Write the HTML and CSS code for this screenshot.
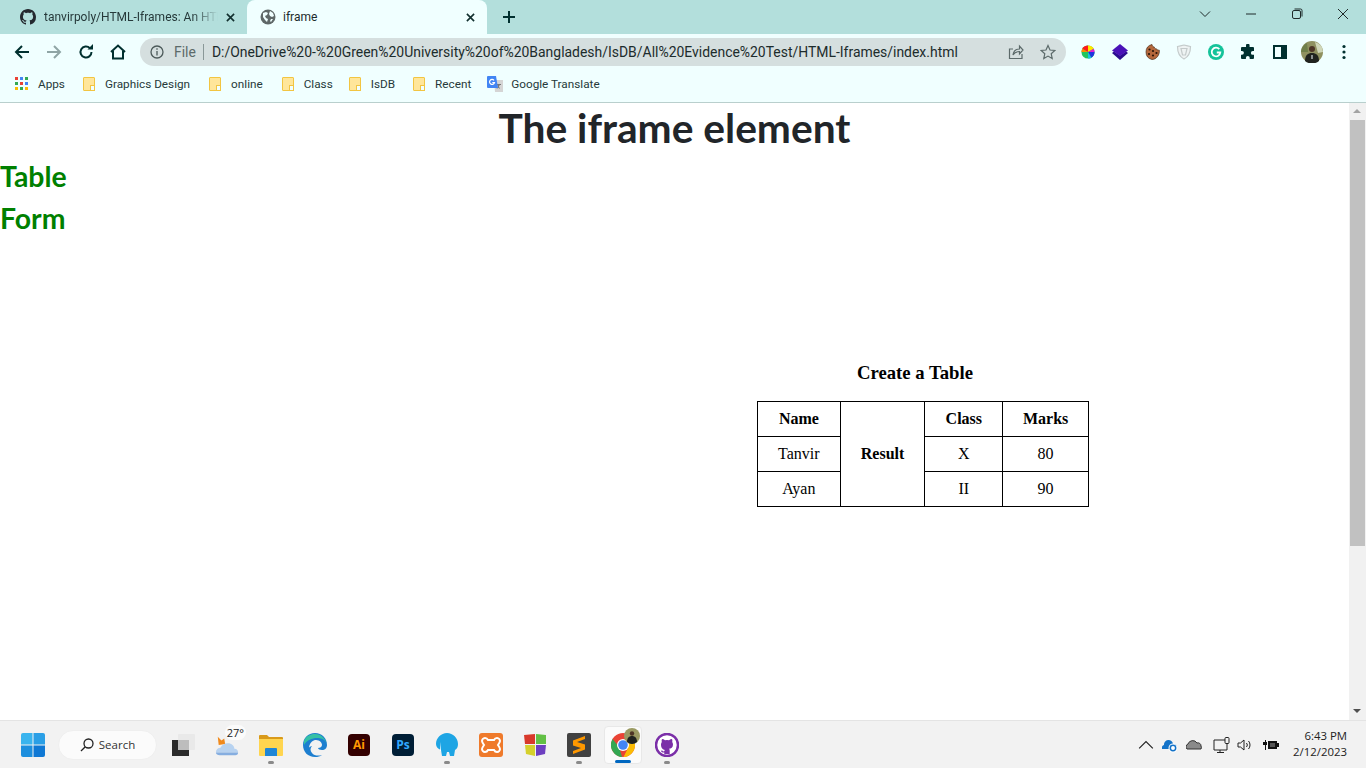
FILE: index.html
```html
<!DOCTYPE html>
<html lang="en">
<head>
    <meta charset="UTF-8">
    <meta name="viewport" content="width=device-width, initial-scale=1.0">
    <title>iframe</title>
    <link rel="stylesheet" href="styles.css">
</head>
<body>
    <!-- Browser tabs -->
    <div class="tabstrip">
        <div class="tab">
            <svg class="tab-icon" viewBox="0 0 16 16"><path fill="#24292f" d="M8 0C3.58 0 0 3.58 0 8c0 3.54 2.29 6.53 5.47 7.59.4.07.55-.17.55-.38 0-.19-.01-.82-.01-1.49-2.01.37-2.53-.49-2.69-.94-.09-.23-.48-.94-.82-1.13-.28-.15-.68-.52-.01-.53.63-.01 1.08.58 1.23.82.72 1.21 1.87.87 2.33.66.07-.52.28-.87.51-1.07-1.78-.2-3.64-.89-3.64-3.95 0-.87.31-1.59.82-2.15-.08-.2-.36-1.02.08-2.12 0 0 .67-.21 2.2.82.64-.18 1.32-.27 2-.27s1.36.09 2 .27c1.53-1.04 2.2-.82 2.2-.82.44 1.1.16 1.92.08 2.12.51.56.82 1.27.82 2.15 0 3.07-1.87 3.75-3.65 3.95.29.25.54.73.54 1.48 0 1.07-.01 1.93-.01 2.2 0 .21.15.46.55.38A8 8 0 0 0 16 8c0-4.42-3.58-8-8-8z"/></svg>
            <span class="tab-title tab-fade">tanvirpoly/HTML-Iframes: An HTML</span>
            <svg class="tab-close" viewBox="0 0 10 10"><path d="M1 1l8 8M9 1L1 9"/></svg>
        </div>
        <div class="tab tab-active">
            <svg class="tab-icon" viewBox="0 0 16 16"><circle cx="8" cy="8" r="7.500" fill="#5f6868"/><path fill="#f0ffff" d="M3 4l3-1 2 1-1 2-2 1 1 2 2 1-1 3-2-2-2-3zM10 2l3 2 1 3-2 1-2-1-1-2zM11 10h2l-2 3-1-1z"/></svg>
            <span class="tab-title">iframe</span>
            <svg class="tab-close" viewBox="0 0 10 10"><path d="M1 1l8 8M9 1L1 9"/></svg>
        </div>
        <svg class="new-tab" viewBox="0 0 12 12"><path d="M6 0v12M0 6h12"/></svg>
        <div class="window-controls">
            <div class="win-btn"><svg viewBox="0 0 12 12"><path d="M1 3.500l5 5 5-5"/></svg></div>
            <div class="win-btn"><svg viewBox="0 0 12 12"><path d="M1 6h10"/></svg></div>
            <div class="win-btn"><svg viewBox="0 0 12 12"><rect x="1.500" y="2.500" width="8" height="8" rx="1.500"/><path d="M3.500 1h6a1.500 1.500 0 0 1 1.500 1.500v6"/></svg></div>
            <div class="win-btn"><svg viewBox="0 0 12 12"><path d="M1 1l10 10M11 1L1 11"/></svg></div>
        </div>
    </div>

    <!-- Address bar -->
    <div class="toolbar">
        <div class="nav-btn"><svg viewBox="0 0 16 16"><path d="M15 8H2M8 2L2 8l6 6"/></svg></div>
        <div class="nav-btn nav-off"><svg viewBox="0 0 16 16"><path d="M1 8h13M8 2l6 6-6 6"/></svg></div>
        <div class="nav-btn"><svg viewBox="0 0 16 16"><path d="M13.500 8a5.500 5.500 0 1 1-1.600-3.900"/><path class="solid" d="M9.500 5.500H15V0z"/></svg></div>
        <div class="nav-btn"><svg viewBox="0 0 16 16"><path d="M1 8l7-6.500L15 8M3 7v7.500h10V7"/></svg></div>
        <div class="omnibox">
            <svg class="info-icon" viewBox="0 0 14 14"><circle cx="7" cy="7" r="6"/><path d="M7 6v4.500M7 3.300v1.500"/></svg>
            <span class="scheme">File</span>
            <span class="url">D:/OneDrive%20-%20Green%20University%20of%20Bangladesh/IsDB/All%20Evidence%20Test/HTML-Iframes/index.html</span>
            <svg class="omni-icon" viewBox="0 0 16 16"><path d="M14 10v4.500H1.500V5H5M5 11c.5-4 3.500-6 6.500-6V2L15 6l-3.500 4V7.500C9 7.500 6.500 8.500 5 11z"/></svg>
            <svg class="omni-icon" viewBox="0 0 16 16"><path d="M8 1.500l2 4.500 4.800.500-3.600 3.200 1 4.800L8 12.100l-4.200 2.400 1-4.800L1.200 6.500 6 6z"/></svg>
        </div>
        <div class="extensions">
            <div class="ext ext-wheel">
                <svg viewBox="0 0 16 16"><circle cx="8" cy="8" r="7.500" fill="#22c55e"/><path fill="#ff1a1a" d="M8 8V.5A7.500 7.500 0 0 0 1.500 4.200z"/><path fill="#ff8c00" d="M8 8L1.500 4.200A7.500 7.500 0 0 0 .5 8z"/><path fill="#ffe600" d="M8 8V.5a7.500 7.500 0 0 1 6.500 3.700z"/><path fill="#e01fd0" d="M8 8l6.500-3.700A7.500 7.500 0 0 1 15.500 8z"/><path fill="#2035e0" d="M8 8h7.500a7.500 7.500 0 0 1-3.700 6.500z"/><path fill="#18c4e0" d="M8 8l3.800 6.500A7.500 7.500 0 0 1 8 15.500z"/></svg>
            </div>
            <div class="ext">
                <svg viewBox="0 0 16 16"><path fill="#2c0d8f" d="M0 9l2-1.500 6 4 6-4L16 9l-8 7z"/><path fill="#4a12b8" d="M8 0l8 6.500L8 12 0 6.500z"/></svg>
            </div>
            <div class="ext">
                <svg viewBox="0 0 16 16"><path fill="#b5683c" stroke="#4b2a14" stroke-width=".7" d="M8 .5c.3 1.700 1.200 2.500 2.300 2.500.1 1.300 1 2.100 2.400 1.900.3.900 1 1.300 2.600 1.300.5 4.700-2.900 9.300-7.300 9.300A7.700 7.700 0 0 1 8 .5z"/><circle cx="5.500" cy="5.500" r="1.100" fill="#2a1408"/><circle cx="9" cy="7" r="1.100" fill="#2a1408"/><circle cx="5" cy="10" r="1.100" fill="#2a1408"/><circle cx="9" cy="11.500" r="1.100" fill="#2a1408"/><circle cx="12.500" cy="9" r="1.100" fill="#2a1408"/></svg>
            </div>
            <div class="ext">
                <svg viewBox="0 0 16 16"><path fill="#eef3f3" stroke="#c4cbcb" stroke-width="1.200" d="M1.500 2.500C4 2 6 1.500 8 1c2 .5 4 1 6.500 1.500C14.500 9 12 13 8 15 4 13 1.500 9 1.500 2.500z"/><path fill="none" stroke="#c4cbcb" stroke-width="1.200" d="M5 4.500h6L9.500 11h-3z"/></svg>
            </div>
            <div class="ext">
                <svg viewBox="0 0 16 16"><circle cx="8" cy="8" r="8" fill="#15c39a"/><path fill="none" stroke="#fff" stroke-width="1.800" d="M11.300 5.200a4.300 4.300 0 1 0 1 3.300H8.800"/></svg>
            </div>
            <div class="ext">
                <svg viewBox="0 0 16 16"><path fill="#00302f" d="M6 1.500a1.800 1.800 0 0 1 3.600 0V3H13a1 1 0 0 1 1 1v3h-1.200a1.900 1.900 0 0 0 0 3.800H14V14a1 1 0 0 1-1 1H9.700v-1.200a1.900 1.900 0 0 0-3.800 0V15H2a1 1 0 0 1-1-1v-3.300h1a1.900 1.900 0 0 0 0-3.800H1V4a1 1 0 0 1 1-1h4z"/></svg>
            </div>
            <div class="ext ext-panel">
                <svg viewBox="0 0 14 14"><path fill="#00302f" d="M0 0h14v14H0z"/><path fill="#f0ffff" d="M2 2h6v10H2z"/></svg>
            </div>
            <div class="ext ext-avatar">
                <svg viewBox="0 0 22 22"><circle cx="11" cy="11" r="11" fill="#8f9160"/><path fill="#cfd6b8" d="M14 1a11 11 0 0 1 8 10l-5 1z"/><path fill="#6f7f4a" d="M0 11a11 11 0 0 1 6-9l1 9z"/><path fill="#20231f" d="M4 20c0-6 3-8 7-8s7 2 7 8a11 11 0 0 1-14 0z"/><path fill="#8a8f8f" d="M10 14h2v4h-2z"/><circle cx="11" cy="8" r="3" fill="#4d3526"/></svg>
            </div>
            <div class="ext ext-menu">
                <svg viewBox="0 0 4 16"><circle cx="2" cy="2.500" r="1.600" fill="#00302f"/><circle cx="2" cy="8" r="1.600" fill="#00302f"/><circle cx="2" cy="13.500" r="1.600" fill="#00302f"/></svg>
            </div>
        </div>
    </div>

    <!-- Bookmarks -->
    <div class="bookmarks">
        <div class="bookmark bookmark-apps">
            <svg viewBox="0 0 13 13"><g>
                <rect width="3" height="3" fill="#ea4335"/><rect x="5" width="3" height="3" fill="#4285f4"/><rect x="10" width="3" height="3" fill="#34a853"/>
                <rect y="5" width="3" height="3" fill="#34a853"/><rect x="5" y="5" width="3" height="3" fill="#ea4335"/><rect x="10" y="5" width="3" height="3" fill="#4285f4"/>
                <rect y="10" width="3" height="3" fill="#fbbc05"/><rect x="5" y="10" width="3" height="3" fill="#34a853"/><rect x="10" y="10" width="3" height="3" fill="#fbbc05"/>
            </g></svg>
            Apps
        </div>
        <div class="bookmark bookmark-wide"><span class="folder"></span>Graphics Design</div>
        <div class="bookmark bookmark-wide"><span class="folder"></span>online</div>
        <div class="bookmark bookmark-tight"><span class="folder"></span>Class</div>
        <div class="bookmark"><span class="folder"></span>IsDB</div>
        <div class="bookmark bookmark-tight"><span class="folder"></span>Recent</div>
        <div class="bookmark bookmark-translate">
            <svg viewBox="0 0 16 16"><path fill="#d5d5d5" d="M7 4h9v12H8z"/><path fill="#777" d="M10 8h4v1h-1.200l-1 2 1.200 1-.5.700-1.300-1-1.200 1-.5-.7 1.300-1.100-.6-1.900H10z"/><path fill="#4285f4" d="M1 0h8l2 12H1a1 1 0 0 1-1-1V1a1 1 0 0 1 1-1z"/><path fill="none" stroke="#fff" stroke-width="1.200" d="M7 4.300A2.500 2.500 0 1 0 7.500 6.500H5.300"/></svg>
            Google Translate
        </div>
    </div>

    <!-- Page -->
    <div class="viewport">
        <main class="page">
            <h1>The iframe element</h1>
            <a class="page-link" href="#">Table</a>
            <a class="page-link" href="#">Form</a>
            <div class="frame">
                <div class="frame-inner">
                    <h3>Create a Table</h3>
                    <table>
                        <tr>
                            <th class="col-name">Name</th>
                            <th class="col-result" rowspan="3">Result</th>
                            <th class="col-class">Class</th>
                            <th class="col-marks">Marks</th>
                        </tr>
                        <tr>
                            <td>Tanvir</td>
                            <td>X</td>
                            <td>80</td>
                        </tr>
                        <tr>
                            <td>Ayan</td>
                            <td>II</td>
                            <td>90</td>
                        </tr>
                    </table>
                </div>
            </div>
        </main>
        <div class="scrollbar">
            <span class="arrow-up"></span>
            <div class="track"><div class="thumb"></div></div>
            <span class="arrow-down"></span>
        </div>
    </div>

    <!-- Windows taskbar -->
    <footer class="taskbar">
        <div class="task-item">
            <svg viewBox="0 0 24 24"><path fill="#3ab4ee" d="M0 2a2 2 0 0 1 2-2h9.500v11.500H0z"/><path fill="#2a9fe6" d="M12.500 0H22a2 2 0 0 1 2 2v9.500H12.500z"/><path fill="#1d8fde" d="M0 12.500h11.500V24H2a2 2 0 0 1-2-2z"/><path fill="#0f78d4" d="M12.500 12.500H24V22a2 2 0 0 1-2 2h-9.500z"/></svg>
        </div>
        <div class="search-pill">
            <svg viewBox="0 0 14 14"><circle cx="8.500" cy="5.500" r="4.500"/><path d="M5.300 8.700L1 13"/></svg>
            Search
        </div>
        <div class="task-item">
            <svg viewBox="0 0 24 24"><rect x="1" y="7" width="17" height="16" fill="#2b2b2b"/><rect x="7" y="1" width="17" height="16" rx="1" fill="#e9e9e9"/><rect x="7" y="7" width="11" height="10" fill="#bdbdbd"/></svg>
        </div>
        <div class="task-item task-weather">
            <svg viewBox="0 0 26 24"><path fill="#f08a1d" d="M3 3l4 4 3-2 1 6-7 1z"/><path fill="#b7d2f0" d="M1 20c0-3 2-5 5-5 1-3 4-5 8-5 4 0 7 3 7 6 3 0 4 2 4 4z"/><path fill="#86aee0" d="M1 20h24c0 2-1 3-3 3H5c-2 0-4-1-4-3z"/></svg>
            <span class="temp">27°</span>
        </div>
        <div class="task-item task-open">
            <svg viewBox="0 0 24 24"><path fill="#d99a1a" d="M0 3a1 1 0 0 1 1-1h7l2 2h13a1 1 0 0 1 1 1v5H0z"/><path fill="#ffd54f" d="M0 6h24v16a1 1 0 0 1-1 1H1a1 1 0 0 1-1-1z"/><path fill="#1f86d6" d="M7 15h10a1 1 0 0 1 1 1v7H6v-7a1 1 0 0 1 1-1z"/></svg>
        </div>
        <div class="task-item">
            <svg viewBox="0 0 24 24"><path fill="#1d7fd0" d="M12 0C5 0 0 5 0 12c0 7 5 12 12 12 3 0 5-.5 7-2-3 1-8 1-10-2-2-2-2-5 0-7-1 0-2 .5-3 1.500C7 9 10 7 13 7c4 0 6 3 6 5 0 2-2 3-4 3 0 1 2 2 4 2 3 0 5-2 5-5 0-7-5-12-12-12z"/><path fill="#35c1a5" d="M1 8C3 3 7 1 12 1c6 0 11 5 11.800 10.500C23 7 19 5 14 5 9 5 4 7 1 12z"/></svg>
        </div>
        <div class="task-item">
            <div class="app-tile tile-ai">Ai</div>
        </div>
        <div class="task-item">
            <div class="app-tile tile-ps">Ps</div>
        </div>
        <div class="task-item task-open">
            <svg viewBox="0 0 24 24"><path fill="#1ea5e4" d="M12 0c6 0 11 5 11 11 0 3-1 5-3 6l-1 6h-4l-1-4h-2l-1 4H7l-1-6C3 16 1 14 1 11 1 5 6 0 12 0z"/><path fill="#fff" d="M6 9v9H5z"/></svg>
        </div>
        <div class="task-item">
            <svg viewBox="0 0 24 24"><rect width="24" height="24" rx="3" fill="#ef7a2b"/><path fill="none" stroke="#fff" stroke-width="2" d="M6 5c2 0 3 2 3 2h6s1-2 3-2 3 2 3 3-1 2.500-2 4c1 1.500 2 3 2 4s-1 3-3 3-3-2-3-2H9s-1 2-3 2-3-2-3-3 1-2.500 2-4c-1-1.500-2-3-2-4s1-3 3-3z"/></svg>
        </div>
        <div class="task-item">
            <svg viewBox="0 0 24 24"><path fill="#d8392b" d="M1 2l11-1v10H2z"/><path fill="#62c045" d="M13 1l10 1v9H13z"/><path fill="#d5d02c" d="M2 12h10v11l-9-2z"/><path fill="#6d3fc0" d="M13 12h10l-1 9-9 2z"/></svg>
        </div>
        <div class="task-item task-open">
            <svg viewBox="0 0 24 24"><rect width="24" height="24" rx="2" fill="#414141"/><path fill="#ff9800" d="M18 3L6 7.500v5l8 2.500-8 3v3l12-4.500v-5L10 9l8-3z"/></svg>
        </div>
        <div class="task-item task-active">
            <svg viewBox="0 0 24 24"><circle cx="12" cy="12" r="12" fill="#ea4335"/><path fill="#34a853" d="M12 24A12 12 0 0 1 1.600 6L8 14l3 10z"/><path fill="#fbbc05" d="M23 7a12 12 0 0 1-10.500 17L17 15l-1-5z"/><circle cx="12" cy="12" r="6" fill="#fff"/><circle cx="12" cy="12" r="4.800" fill="#4285f4"/></svg>
            <svg class="badge" viewBox="0 0 16 16"><circle cx="8" cy="8" r="8" fill="#9a9a63"/><path fill="#20231f" d="M3 14c0-4 2-6 5-6s5 2 5 6a8 8 0 0 1-10 0z"/><circle cx="8" cy="5.500" r="2.200" fill="#4d3526"/></svg>
        </div>
        <div class="task-item task-open">
            <svg viewBox="0 0 24 24"><circle cx="12" cy="12" r="11" fill="#fff" stroke="#7b2fa8" stroke-width="2.500"/><path fill="#7b2fa8" d="M7 6c1 0 2 .5 3 1.200a8 8 0 0 1 4 0C15 6.500 16 6 17 6c.5 1 .5 2 .2 3 .5.700.8 1.500.8 2.500 0 3-2 4-4 4.300.500.500.700 1 .700 1.700V21H9.300v-1.500c-1.500.300-3-.2-3.500-1.700l1.500-.3c.5 1 1.200 1 2 .8 0-.5.200-1 .5-1.400C8 16.500 6 15.500 6 11.500c0-1 .3-1.800.8-2.500-.3-1-.3-2 .2-3z"/></svg>
        </div>
        <div class="tray">
            <svg class="tray-icon" viewBox="0 0 14 14"><path d="M1 10l6-6 6 6"/></svg>
            <svg class="tray-icon" viewBox="0 0 16 14"><path fill="#1473c8" stroke="none" d="M0 11a3 3 0 0 1 2-4 4.500 4.500 0 0 1 9-1 3.500 3.500 0 0 1 4 3v2z"/><circle cx="11" cy="10" r="4.500" fill="#fff" stroke="none"/><circle cx="11" cy="10" r="2.700" stroke="#1473c8" stroke-width="1.500"/></svg>
            <svg class="tray-icon" viewBox="0 0 16 14"><path fill="#8a8a8a" stroke="#333" d="M1 11a3 3 0 0 1 1-5 5 5 0 0 1 9-1 3 3 0 0 1 4 3 3 3 0 0 1 0 3z"/></svg>
            <svg class="tray-icon tray-net" viewBox="0 0 18 16"><path d="M12 3H1v10h13v-2M7 13v2M4 15.500h7"/><rect x="12" y=".5" width="4" height="6" rx="1"/><path d="M14 6.500V11"/></svg>
            <svg class="tray-icon tray-sound" viewBox="0 0 16 14"><path d="M1 5v4h2.500L7 12V2L3.500 5zM9.500 5a3 3 0 0 1 0 4M11.500 3a6 6 0 0 1 0 8"/></svg>
            <svg class="tray-icon tray-power" viewBox="0 0 16 12"><path fill="#111" stroke="none" d="M2 1h1v2h1v3H3v5H2V6H0V3h2zM5 2h9v2h2v4h-2v2H5z"/><path fill="#555" stroke="none" d="M7 4h5v4H7z"/></svg>
        </div>
        <div class="clock">
            <div>6:43 PM</div>
            <div>2/12/2023</div>
        </div>
    </footer>
</body>
</html>
```

FILE: styles.css
```css
* {
    box-sizing: border-box;
}

html, body {
    margin: 0;
    padding: 0;
    height: 100%;
    overflow: hidden;
}

body {
    display: flex;
    flex-direction: column;
    height: 768px;
    font-family: 'Lato', sans-serif;
    background-color: #fff;
    color: #222;
}

/* Browser tabs */
.tabstrip {
    display: flex;
    align-items: stretch;
    height: 34px;
    flex-shrink: 0;
    padding-left: 8px;
    background-color: #b3dfdc;
}

.tab {
    display: flex;
    align-items: center;
    width: 239px;
    padding: 0 12px;
    font-family: 'Roboto', sans-serif;
    font-size: 12px;
    color: #26393a;
}

.tab-active {
    width: 240px;
    background-color: #f0ffff;
    border-radius: 8px 8px 0 0;
    color: #1d2b2b;
}

.tab-icon {
    width: 16px;
    height: 16px;
    flex-shrink: 0;
    margin-right: 8px;
}

.tab-active .tab-icon {
    margin-left: 1px;
    margin-right: 7px;
}

.tab-title {
    flex: 1;
    overflow: hidden;
    white-space: nowrap;
}

.tab-fade {
    -webkit-mask-image: linear-gradient(to right, #000 85%, transparent 100%);
    mask-image: linear-gradient(to right, #000 85%, transparent 100%);
}

.tab-close {
    width: 9px;
    height: 9px;
    flex-shrink: 0;
    margin-left: 8px;
    fill: none;
    stroke: #12302f;
    stroke-width: 1.800;
}

.new-tab {
    width: 12px;
    height: 12px;
    align-self: center;
    margin-left: 16px;
    fill: none;
    stroke: #00302f;
    stroke-width: 2;
}

.window-controls {
    display: flex;
    margin-left: auto;
    height: 28px;
}

.win-btn {
    display: flex;
    align-items: center;
    justify-content: center;
    width: 46px;
}

.win-btn svg {
    width: 12px;
    height: 12px;
    fill: none;
    stroke: #1f2a2a;
    stroke-width: 1;
}

/* Address bar */
.toolbar {
    display: flex;
    align-items: center;
    height: 34px;
    flex-shrink: 0;
    padding-left: 6px;
    padding-top: 2px;
    background-color: #f0ffff;
}

.nav-btn {
    display: flex;
    align-items: center;
    justify-content: center;
    width: 32px;
    height: 28px;
}

.nav-btn svg {
    width: 16px;
    height: 16px;
    fill: none;
    stroke: #00302f;
    stroke-width: 2;
}

.nav-btn .solid {
    fill: #00302f;
    stroke: none;
}

.nav-off svg {
    stroke: #8fa5a5;
}

.omnibox {
    display: flex;
    align-items: center;
    width: 926px;
    height: 28px;
    margin-left: 6px;
    padding: 0 10px;
    border-radius: 14px;
    background-color: #d5dfdf;
    font-family: 'Roboto', sans-serif;
    font-size: 13.940px;
}

.info-icon {
    width: 14px;
    height: 14px;
    flex-shrink: 0;
    fill: none;
    stroke: #4c5a5a;
    stroke-width: 1.300;
}

.scheme {
    margin-left: 10px;
    padding-right: 7px;
    border-right: 1px solid #8a9898;
    line-height: 16px;
    color: #5c6a6a;
}

.url {
    flex: 1;
    margin-left: 8px;
    white-space: nowrap;
    color: #1c2c2c;
}

.omni-icon {
    width: 16px;
    height: 16px;
    flex-shrink: 0;
    margin-left: 16px;
    fill: none;
    stroke: #5c6a6a;
    stroke-width: 1.200;
}

.extensions {
    display: flex;
    align-items: center;
    margin-left: 6px;
}

.ext {
    display: flex;
    align-items: center;
    justify-content: center;
    width: 32px;
    height: 28px;
}

.ext svg {
    width: 16px;
    height: 16px;
}

.ext-wheel svg,
.ext-panel svg {
    width: 14px;
    height: 14px;
}

.ext-avatar svg {
    width: 22px;
    height: 22px;
}

/* Bookmarks */
.bookmarks {
    display: flex;
    align-items: center;
    height: 35px;
    flex-shrink: 0;
    padding-left: 15px;
    padding-bottom: 3px;
    background-color: #f0ffff;
    border-bottom: 1px solid #b9cfcd;
    font-family: 'Roboto', sans-serif;
    font-size: 11.750px;
    color: #26393a;
}

.bookmark {
    display: flex;
    align-items: center;
    margin-right: 18px;
    white-space: nowrap;
}

.bookmark-wide {
    margin-right: 19px;
}

.bookmark-tight {
    margin-right: 16px;
}

.bookmark-apps svg {
    width: 13px;
    height: 13px;
    margin-right: 10px;
}

.bookmark-translate svg {
    width: 16px;
    height: 16px;
    margin-right: 8px;
}

.folder {
    position: relative;
    display: inline-block;
    width: 12px;
    height: 14px;
    margin-right: 10px;
    background-color: #ffe69a;
    border: 1px solid #f2c542;
    border-radius: 1px;
}

.folder::after {
    content: "";
    position: absolute;
    right: -1px;
    bottom: -1px;
    width: 3px;
    height: 4px;
    background-color: #f0ffff;
    border: 1px solid #f2c542;
}

/* Page */
.viewport {
    display: flex;
    flex: 1;
    min-height: 0;
}

.page {
    flex: 1;
    min-width: 0;
}

h1 {
    margin: 0 0 7px;
    padding-top: 1px;
    font-size: 40.700px;
    font-weight: 700;
    line-height: 48px;
    text-align: center;
    color: #212529;
}

.page-link {
    display: block;
    height: 42px;
    font-size: 28.400px;
    font-weight: 700;
    line-height: 34px;
    color: #008000;
    text-decoration: none;
}

.frame {
    display: flex;
    padding-left: 757px;
    padding-top: 119px;
    font-family: 'Liberation Serif', serif;
    color: #000;
}

.frame-inner {
    width: 332px;
}

h3 {
    margin: 0 0 17px;
    padding-right: 16px;
    font-size: 18.720px;
    font-weight: bold;
    line-height: 22px;
    text-align: center;
}

table {
    width: 332px;
    border-collapse: collapse;
    font-size: 16px;
}

th, td {
    height: 35px;
    padding: 0;
    border: 1px solid #000;
    text-align: center;
}

.col-name { width: 83px; }
.col-result { width: 85px; }
.col-class { width: 78px; }
.col-marks { width: 86px; }

.scrollbar {
    display: flex;
    flex-direction: column;
    width: 17px;
    flex-shrink: 0;
    background-color: #f1f1f1;
}

.track {
    flex: 1;
    padding: 0 1px;
}

.thumb {
    height: 426px;
    background-color: #c1c1c1;
}

.arrow-up, .arrow-down {
    display: block;
    height: 17px;
    position: relative;
}

.arrow-up::after, .arrow-down::after {
    content: "";
    position: absolute;
    left: 4px;
    top: 6px;
    border-left: 4px solid transparent;
    border-right: 4px solid transparent;
}

.arrow-up::after {
    border-bottom: 4px solid #a3a3a3;
}

.arrow-down::after {
    border-top: 4px solid #505050;
}

/* Windows taskbar */
.taskbar {
    display: flex;
    align-items: center;
    height: 48px;
    flex-shrink: 0;
    padding-left: 11px;
    background-color: #f2f2f2;
    border-top: 1px solid #e4e4e4;
}

.task-item {
    position: relative;
    display: flex;
    align-items: center;
    justify-content: center;
    width: 44px;
    height: 44px;
}

.task-item svg {
    width: 24px;
    height: 24px;
}

.task-open::after,
.task-active::after {
    content: "";
    position: absolute;
    bottom: 3px;
    left: 19px;
    width: 6px;
    height: 3px;
    border-radius: 2px;
    background-color: #8a8a8a;
}

.task-active {
    width: 38px;
    height: 38px;
    margin: 0 3px;
    background-color: #fbfbfb;
    border: 1px solid #e8e8e8;
    border-radius: 4px;
}

.task-active::after {
    left: 10px;
    bottom: 0;
    width: 16px;
    background-color: #0067c0;
}

.task-item .badge {
    position: absolute;
    top: 1px;
    right: 1px;
    width: 16px;
    height: 16px;
}

.temp {
    position: absolute;
    top: 2px;
    right: 3px;
    padding: 0 2px;
    border-radius: 8px;
    background-color: #fbfbfb;
    font-family: 'Open Sans', sans-serif;
    font-size: 11px;
    line-height: 15px;
    color: #222;
}

.search-pill {
    display: flex;
    align-items: center;
    justify-content: center;
    width: 99px;
    height: 30px;
    margin: 0 4px 0 3px;
    border-radius: 15px;
    background-color: #fbfbfb;
    border: 1px solid #efefef;
    font-family: 'Open Sans', sans-serif;
    font-size: 11.500px;
    color: #333;
}

.search-pill svg {
    width: 14px;
    height: 14px;
    margin-right: 5px;
    fill: none;
    stroke: #222;
    stroke-width: 1.300;
}

.app-tile {
    display: flex;
    align-items: center;
    justify-content: center;
    width: 22px;
    height: 22px;
    border-radius: 4px;
    font-family: 'Open Sans', sans-serif;
    font-size: 12px;
    font-weight: 700;
}

.tile-ai {
    background-color: #330000;
    color: #ff9a00;
}

.tile-ps {
    background-color: #001e36;
    color: #31a8ff;
}

.tray {
    display: flex;
    align-items: center;
    margin-left: auto;
}

.tray-icon {
    width: 16px;
    height: 16px;
    margin-left: 8px;
    fill: none;
    stroke: #222;
    stroke-width: 1;
}

.tray-net {
    width: 18px;
    margin-left: 11px;
}

.tray-sound {
    margin-left: 6px;
}

.tray-power {
    margin-left: 10px;
}

.clock {
    width: 68px;
    margin-right: 19px;
    padding-bottom: 1px;
    font-family: 'Open Sans', sans-serif;
    font-size: 11.400px;
    line-height: 16px;
    text-align: right;
    color: #222;
}
```
